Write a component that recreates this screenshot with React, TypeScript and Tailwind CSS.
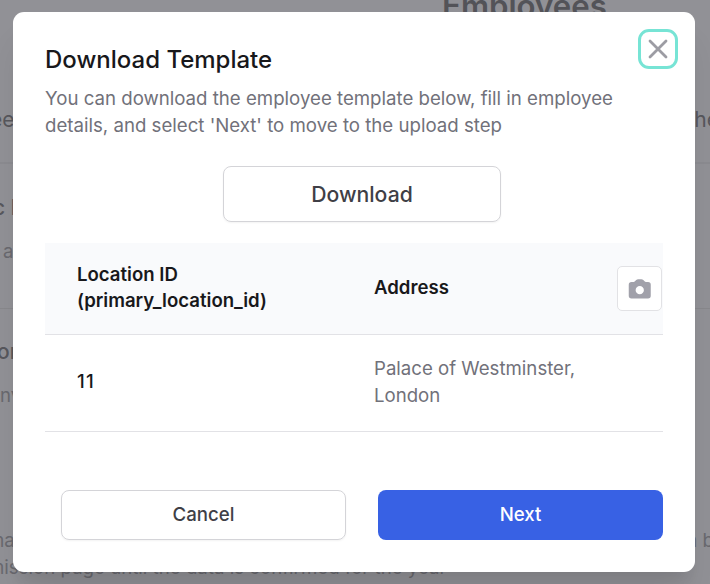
import React from 'react';

function PageBehind() {
  return (
    <div className="flex h-[584px] w-[710px] flex-col overflow-hidden whitespace-nowrap text-[#69696f]">
      <div className="flex h-[104px] shrink-0 pl-[442px] text-[31.2px] leading-[34px] font-semibold text-[#535358]">
        <span className="-mt-[11px]">Employees</span>
      </div>
      <div className="flex h-[60px] shrink-0 justify-between border-b-2 border-[#8b8b90] text-[21px] leading-8 text-[#57575c]">
        <span className="-ml-[10px]">ee</span>
        <span className="-mr-[9px]">he</span>
      </div>
      <div className="flex h-[145px] shrink-0 flex-col border-b border-[#88888c] pt-[28px]">
        <span className="-ml-[7px] text-[21px] leading-8 font-medium text-[#57575c]">c l</span>
        <span className="mt-[14px] pl-[3px] text-[18.67px] leading-7">a</span>
      </div>
      <div className="flex h-[145px] shrink-0 flex-col pt-[27px]">
        <span className="-ml-[3px] text-[21px] leading-8 font-medium text-[#57575c]">or</span>
        <span className="mt-[14px] text-[18.67px] leading-7">nv</span>
      </div>
      <div className="flex grow flex-col pt-[73px] text-[18.67px] leading-[27px]">
        <div className="flex justify-between">
          <span className="-ml-[12px]">ma</span>
          <span className="-mr-[4px]">n b</span>
        </div>
        <span className="-ml-[12px]">mission page until the data is confirmed for the year</span>
      </div>
    </div>
  );
}

function CloseButton() {
  return (
    <button
      aria-label="Close"
      className="-mr-[15px] flex size-10 shrink-0 items-center justify-center rounded-[11px] border-3 border-[#77e4d5]"
    >
      <svg width="32" height="32" viewBox="0 0 32 32" fill="none" className="shrink-0" stroke="#9c9ca3" strokeWidth="2.8" strokeLinecap="round">
        <path d="M8 8L24 24M24 8L8 24" />
      </svg>
    </button>
  );
}

function CameraIcon() {
  return (
    <svg width="27.5" height="27.5" viewBox="0 0 20 20" fill="#a1a1aa">
      <path
        fillRule="evenodd"
        clipRule="evenodd"
        d="M4 5a2 2 0 00-2 2v8a2 2 0 002 2h12a2 2 0 002-2V7a2 2 0 00-2-2h-1.586a1 1 0 01-.707-.293l-1.121-1.121A2 2 0 0011.172 3H8.828a2 2 0 00-1.414.586L6.293 4.707A1 1 0 015.586 5H4zm6 9a3 3 0 100-6 3 3 0 000 6z"
      />
    </svg>
  );
}

function LocationTable() {
  return (
    <div className="mt-[21px]">
      <div className="flex h-[92px] items-center border-b border-[#e2e2e6] bg-[#f9fafc] pr-px text-[18.6px] leading-[26px] font-semibold text-[#18181b]">
        <div className="w-[329px] pb-[3px] pl-8">
          Location ID
          <br />
          (primary_location_id)
        </div>
        <div className="grow pb-1">Address</div>
        <button aria-label="Capture" className="flex size-[45px] items-center justify-center rounded-[5px] border border-[#e2e2e5] bg-white">
          <CameraIcon />
        </button>
      </div>
      <div className="flex h-[97px] items-center border-b border-[#e2e2e6] text-[18.64px] leading-[27px]">
        <div className="w-[329px] pb-1 pl-8 font-[550] tracking-[1.2px] text-[#18181b]">11</div>
        <div className="w-[230px] pb-0.5 text-[#71717a]">Palace of Westminster, London</div>
      </div>
    </div>
  );
}

export default function App() {
  return (
    <div className="relative h-[584px] w-[710px] overflow-hidden bg-[#919196] font-['Inter','Liberation_Sans',sans-serif]">
      <PageBehind />
      <div className="absolute top-3 left-[13px] flex h-[560px] w-[682px] flex-col rounded-[11px] bg-white px-8 pt-[17px] shadow-[0_27px_33px_-7px_rgba(0,0,0,0.1),0_13px_13px_-7px_rgba(0,0,0,0.06)]">
        <div className="flex h-[56px] justify-between">
          <h1 className="pt-[15px] text-[24px] leading-8 font-medium text-[#18181b]">Download Template</h1>
          <CloseButton />
        </div>
        <p className="w-[600px] text-[18.65px] leading-[27px] text-[#71717a]">
          You can download the employee template below, fill in employee details, and select 'Next' to move to the upload step
        </p>
        <button className="mt-[27px] ml-[178px] h-[56px] w-[278px] shrink-0 rounded-lg border border-[#d4d4d8] pt-0.5 text-[21.2px] font-medium text-[#3f3f46] shadow-xs">
          Download
        </button>
        <LocationTable />
        <div className="mt-[58px] flex gap-8 pl-4 text-[18.67px] font-medium">
          <button className="h-[50px] w-[285px] rounded-lg border border-[#d4d4d8] text-[#3f3f46] shadow-xs">Cancel</button>
          <button className="h-[50px] w-[285px] rounded-lg bg-[#3861e4] font-[550] text-white">Next</button>
        </div>
      </div>
    </div>
  );
}
